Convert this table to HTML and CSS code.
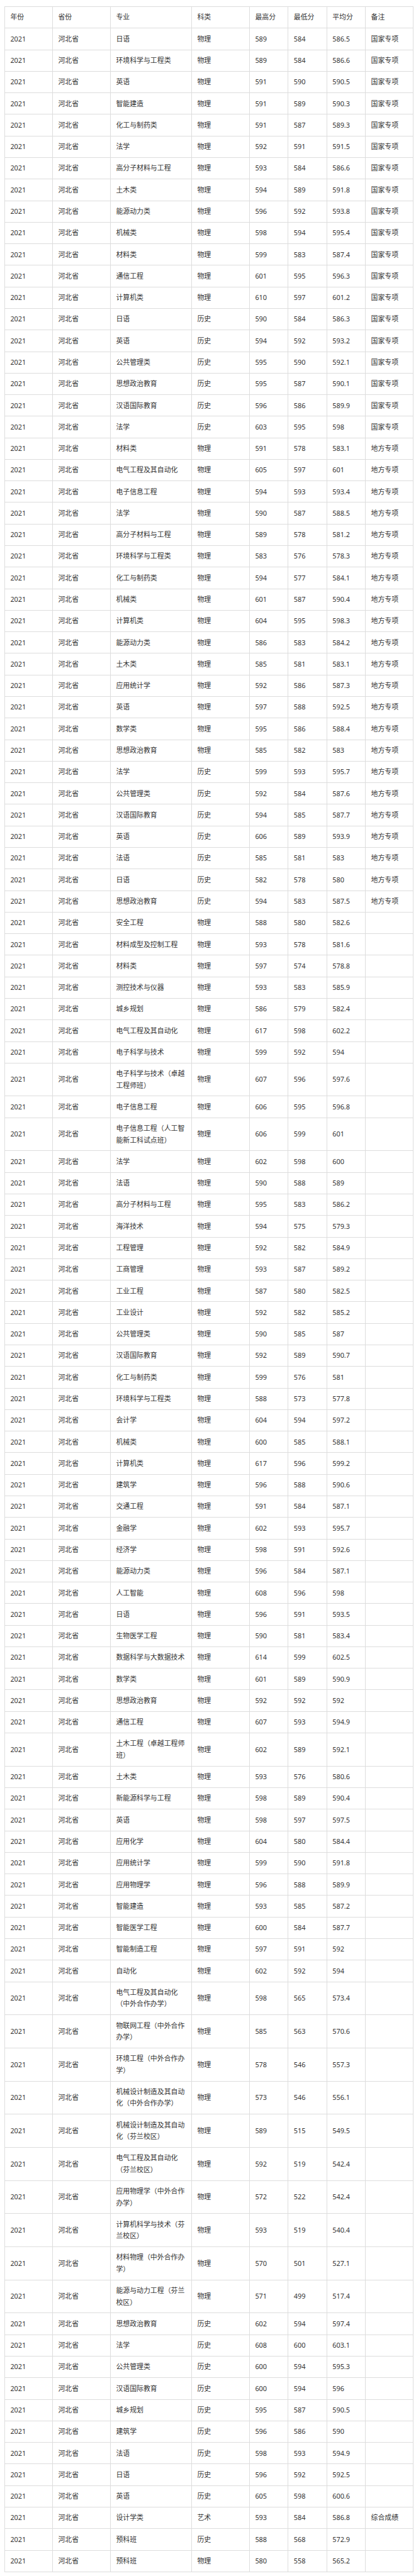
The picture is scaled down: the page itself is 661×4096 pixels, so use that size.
FILE: index.html
```html
<!DOCTYPE html>
<html lang="zh-CN">
<head>
<meta charset="utf-8">
<title>2021 河北省 录取分数</title>
<link rel="stylesheet" href="styles.css">
</head>
<body>
<table class="scores">
<colgroup>
<col class="c-year"><col class="c-prov"><col class="c-major"><col class="c-type"><col class="c-num"><col class="c-num"><col class="c-num"><col class="c-note">
</colgroup>
<tbody>
<tr><td>年份</td><td>省份</td><td>专业</td><td>科类</td><td>最高分</td><td>最低分</td><td>平均分</td><td>备注</td></tr>
<tr><td>2021</td><td>河北省</td><td>日语</td><td>物理</td><td>589</td><td>584</td><td>586.5</td><td>国家专项</td></tr>
<tr><td>2021</td><td>河北省</td><td>环境科学与工程类</td><td>物理</td><td>589</td><td>584</td><td>586.6</td><td>国家专项</td></tr>
<tr><td>2021</td><td>河北省</td><td>英语</td><td>物理</td><td>591</td><td>590</td><td>590.5</td><td>国家专项</td></tr>
<tr><td>2021</td><td>河北省</td><td>智能建造</td><td>物理</td><td>591</td><td>589</td><td>590.3</td><td>国家专项</td></tr>
<tr><td>2021</td><td>河北省</td><td>化工与制药类</td><td>物理</td><td>591</td><td>587</td><td>589.3</td><td>国家专项</td></tr>
<tr><td>2021</td><td>河北省</td><td>法学</td><td>物理</td><td>592</td><td>591</td><td>591.5</td><td>国家专项</td></tr>
<tr><td>2021</td><td>河北省</td><td>高分子材料与工程</td><td>物理</td><td>593</td><td>584</td><td>586.6</td><td>国家专项</td></tr>
<tr><td>2021</td><td>河北省</td><td>土木类</td><td>物理</td><td>594</td><td>589</td><td>591.8</td><td>国家专项</td></tr>
<tr><td>2021</td><td>河北省</td><td>能源动力类</td><td>物理</td><td>596</td><td>592</td><td>593.8</td><td>国家专项</td></tr>
<tr><td>2021</td><td>河北省</td><td>机械类</td><td>物理</td><td>598</td><td>594</td><td>595.4</td><td>国家专项</td></tr>
<tr><td>2021</td><td>河北省</td><td>材料类</td><td>物理</td><td>599</td><td>583</td><td>587.4</td><td>国家专项</td></tr>
<tr><td>2021</td><td>河北省</td><td>通信工程</td><td>物理</td><td>601</td><td>595</td><td>596.3</td><td>国家专项</td></tr>
<tr><td>2021</td><td>河北省</td><td>计算机类</td><td>物理</td><td>610</td><td>597</td><td>601.2</td><td>国家专项</td></tr>
<tr><td>2021</td><td>河北省</td><td>日语</td><td>历史</td><td>590</td><td>584</td><td>586.3</td><td>国家专项</td></tr>
<tr><td>2021</td><td>河北省</td><td>英语</td><td>历史</td><td>594</td><td>592</td><td>593.2</td><td>国家专项</td></tr>
<tr><td>2021</td><td>河北省</td><td>公共管理类</td><td>历史</td><td>595</td><td>590</td><td>592.1</td><td>国家专项</td></tr>
<tr><td>2021</td><td>河北省</td><td>思想政治教育</td><td>历史</td><td>595</td><td>587</td><td>590.1</td><td>国家专项</td></tr>
<tr><td>2021</td><td>河北省</td><td>汉语国际教育</td><td>历史</td><td>596</td><td>586</td><td>589.9</td><td>国家专项</td></tr>
<tr><td>2021</td><td>河北省</td><td>法学</td><td>历史</td><td>603</td><td>595</td><td>598</td><td>国家专项</td></tr>
<tr><td>2021</td><td>河北省</td><td>材料类</td><td>物理</td><td>591</td><td>578</td><td>583.1</td><td>地方专项</td></tr>
<tr><td>2021</td><td>河北省</td><td>电气工程及其自动化</td><td>物理</td><td>605</td><td>597</td><td>601</td><td>地方专项</td></tr>
<tr><td>2021</td><td>河北省</td><td>电子信息工程</td><td>物理</td><td>594</td><td>593</td><td>593.4</td><td>地方专项</td></tr>
<tr><td>2021</td><td>河北省</td><td>法学</td><td>物理</td><td>590</td><td>587</td><td>588.5</td><td>地方专项</td></tr>
<tr><td>2021</td><td>河北省</td><td>高分子材料与工程</td><td>物理</td><td>589</td><td>578</td><td>581.2</td><td>地方专项</td></tr>
<tr><td>2021</td><td>河北省</td><td>环境科学与工程类</td><td>物理</td><td>583</td><td>576</td><td>578.3</td><td>地方专项</td></tr>
<tr><td>2021</td><td>河北省</td><td>化工与制药类</td><td>物理</td><td>594</td><td>577</td><td>584.1</td><td>地方专项</td></tr>
<tr><td>2021</td><td>河北省</td><td>机械类</td><td>物理</td><td>601</td><td>587</td><td>590.4</td><td>地方专项</td></tr>
<tr><td>2021</td><td>河北省</td><td>计算机类</td><td>物理</td><td>604</td><td>595</td><td>598.3</td><td>地方专项</td></tr>
<tr><td>2021</td><td>河北省</td><td>能源动力类</td><td>物理</td><td>586</td><td>583</td><td>584.2</td><td>地方专项</td></tr>
<tr><td>2021</td><td>河北省</td><td>土木类</td><td>物理</td><td>585</td><td>581</td><td>583.1</td><td>地方专项</td></tr>
<tr><td>2021</td><td>河北省</td><td>应用统计学</td><td>物理</td><td>592</td><td>586</td><td>587.3</td><td>地方专项</td></tr>
<tr><td>2021</td><td>河北省</td><td>英语</td><td>物理</td><td>597</td><td>588</td><td>592.5</td><td>地方专项</td></tr>
<tr><td>2021</td><td>河北省</td><td>数学类</td><td>物理</td><td>595</td><td>586</td><td>588.4</td><td>地方专项</td></tr>
<tr><td>2021</td><td>河北省</td><td>思想政治教育</td><td>物理</td><td>585</td><td>582</td><td>583</td><td>地方专项</td></tr>
<tr><td>2021</td><td>河北省</td><td>法学</td><td>历史</td><td>599</td><td>593</td><td>595.7</td><td>地方专项</td></tr>
<tr><td>2021</td><td>河北省</td><td>公共管理类</td><td>历史</td><td>592</td><td>584</td><td>587.6</td><td>地方专项</td></tr>
<tr><td>2021</td><td>河北省</td><td>汉语国际教育</td><td>历史</td><td>594</td><td>585</td><td>587.7</td><td>地方专项</td></tr>
<tr><td>2021</td><td>河北省</td><td>英语</td><td>历史</td><td>606</td><td>589</td><td>593.9</td><td>地方专项</td></tr>
<tr><td>2021</td><td>河北省</td><td>法语</td><td>历史</td><td>585</td><td>581</td><td>583</td><td>地方专项</td></tr>
<tr><td>2021</td><td>河北省</td><td>日语</td><td>历史</td><td>582</td><td>578</td><td>580</td><td>地方专项</td></tr>
<tr><td>2021</td><td>河北省</td><td>思想政治教育</td><td>历史</td><td>594</td><td>583</td><td>587.5</td><td>地方专项</td></tr>
<tr><td>2021</td><td>河北省</td><td>安全工程</td><td>物理</td><td>588</td><td>580</td><td>582.6</td><td></td></tr>
<tr><td>2021</td><td>河北省</td><td>材料成型及控制工程</td><td>物理</td><td>593</td><td>578</td><td>581.6</td><td></td></tr>
<tr><td>2021</td><td>河北省</td><td>材料类</td><td>物理</td><td>597</td><td>574</td><td>578.8</td><td></td></tr>
<tr><td>2021</td><td>河北省</td><td>测控技术与仪器</td><td>物理</td><td>593</td><td>583</td><td>585.9</td><td></td></tr>
<tr><td>2021</td><td>河北省</td><td>城乡规划</td><td>物理</td><td>586</td><td>579</td><td>582.4</td><td></td></tr>
<tr><td>2021</td><td>河北省</td><td>电气工程及其自动化</td><td>物理</td><td>617</td><td>598</td><td>602.2</td><td></td></tr>
<tr><td>2021</td><td>河北省</td><td>电子科学与技术</td><td>物理</td><td>599</td><td>592</td><td>594</td><td></td></tr>
<tr><td>2021</td><td>河北省</td><td>电子科学与技术（卓越工程师班）</td><td>物理</td><td>607</td><td>596</td><td>597.6</td><td></td></tr>
<tr><td>2021</td><td>河北省</td><td>电子信息工程</td><td>物理</td><td>606</td><td>595</td><td>596.8</td><td></td></tr>
<tr><td>2021</td><td>河北省</td><td>电子信息工程（人工智能新工科试点班）</td><td>物理</td><td>606</td><td>599</td><td>601</td><td></td></tr>
<tr><td>2021</td><td>河北省</td><td>法学</td><td>物理</td><td>602</td><td>598</td><td>600</td><td></td></tr>
<tr><td>2021</td><td>河北省</td><td>法语</td><td>物理</td><td>590</td><td>588</td><td>589</td><td></td></tr>
<tr><td>2021</td><td>河北省</td><td>高分子材料与工程</td><td>物理</td><td>595</td><td>583</td><td>586.2</td><td></td></tr>
<tr><td>2021</td><td>河北省</td><td>海洋技术</td><td>物理</td><td>594</td><td>575</td><td>579.3</td><td></td></tr>
<tr><td>2021</td><td>河北省</td><td>工程管理</td><td>物理</td><td>592</td><td>582</td><td>584.9</td><td></td></tr>
<tr><td>2021</td><td>河北省</td><td>工商管理</td><td>物理</td><td>593</td><td>587</td><td>589.2</td><td></td></tr>
<tr><td>2021</td><td>河北省</td><td>工业工程</td><td>物理</td><td>587</td><td>580</td><td>582.5</td><td></td></tr>
<tr><td>2021</td><td>河北省</td><td>工业设计</td><td>物理</td><td>592</td><td>582</td><td>585.2</td><td></td></tr>
<tr><td>2021</td><td>河北省</td><td>公共管理类</td><td>物理</td><td>590</td><td>585</td><td>587</td><td></td></tr>
<tr><td>2021</td><td>河北省</td><td>汉语国际教育</td><td>物理</td><td>592</td><td>589</td><td>590.7</td><td></td></tr>
<tr><td>2021</td><td>河北省</td><td>化工与制药类</td><td>物理</td><td>599</td><td>576</td><td>581</td><td></td></tr>
<tr><td>2021</td><td>河北省</td><td>环境科学与工程类</td><td>物理</td><td>588</td><td>573</td><td>577.8</td><td></td></tr>
<tr><td>2021</td><td>河北省</td><td>会计学</td><td>物理</td><td>604</td><td>594</td><td>597.2</td><td></td></tr>
<tr><td>2021</td><td>河北省</td><td>机械类</td><td>物理</td><td>600</td><td>585</td><td>588.1</td><td></td></tr>
<tr><td>2021</td><td>河北省</td><td>计算机类</td><td>物理</td><td>617</td><td>596</td><td>599.2</td><td></td></tr>
<tr><td>2021</td><td>河北省</td><td>建筑学</td><td>物理</td><td>596</td><td>588</td><td>590.6</td><td></td></tr>
<tr><td>2021</td><td>河北省</td><td>交通工程</td><td>物理</td><td>591</td><td>584</td><td>587.1</td><td></td></tr>
<tr><td>2021</td><td>河北省</td><td>金融学</td><td>物理</td><td>602</td><td>593</td><td>595.7</td><td></td></tr>
<tr><td>2021</td><td>河北省</td><td>经济学</td><td>物理</td><td>598</td><td>591</td><td>592.6</td><td></td></tr>
<tr><td>2021</td><td>河北省</td><td>能源动力类</td><td>物理</td><td>596</td><td>584</td><td>587.1</td><td></td></tr>
<tr><td>2021</td><td>河北省</td><td>人工智能</td><td>物理</td><td>608</td><td>596</td><td>598</td><td></td></tr>
<tr><td>2021</td><td>河北省</td><td>日语</td><td>物理</td><td>596</td><td>591</td><td>593.5</td><td></td></tr>
<tr><td>2021</td><td>河北省</td><td>生物医学工程</td><td>物理</td><td>590</td><td>581</td><td>583.4</td><td></td></tr>
<tr><td>2021</td><td>河北省</td><td>数据科学与大数据技术</td><td>物理</td><td>614</td><td>599</td><td>602.5</td><td></td></tr>
<tr><td>2021</td><td>河北省</td><td>数学类</td><td>物理</td><td>601</td><td>589</td><td>590.9</td><td></td></tr>
<tr><td>2021</td><td>河北省</td><td>思想政治教育</td><td>物理</td><td>592</td><td>592</td><td>592</td><td></td></tr>
<tr><td>2021</td><td>河北省</td><td>通信工程</td><td>物理</td><td>607</td><td>593</td><td>594.9</td><td></td></tr>
<tr><td>2021</td><td>河北省</td><td>土木工程（卓越工程师班）</td><td>物理</td><td>602</td><td>589</td><td>592.1</td><td></td></tr>
<tr><td>2021</td><td>河北省</td><td>土木类</td><td>物理</td><td>593</td><td>576</td><td>580.6</td><td></td></tr>
<tr><td>2021</td><td>河北省</td><td>新能源科学与工程</td><td>物理</td><td>598</td><td>589</td><td>590.4</td><td></td></tr>
<tr><td>2021</td><td>河北省</td><td>英语</td><td>物理</td><td>598</td><td>597</td><td>597.5</td><td></td></tr>
<tr><td>2021</td><td>河北省</td><td>应用化学</td><td>物理</td><td>604</td><td>580</td><td>584.4</td><td></td></tr>
<tr><td>2021</td><td>河北省</td><td>应用统计学</td><td>物理</td><td>599</td><td>590</td><td>591.8</td><td></td></tr>
<tr><td>2021</td><td>河北省</td><td>应用物理学</td><td>物理</td><td>596</td><td>588</td><td>589.9</td><td></td></tr>
<tr><td>2021</td><td>河北省</td><td>智能建造</td><td>物理</td><td>593</td><td>585</td><td>587.2</td><td></td></tr>
<tr><td>2021</td><td>河北省</td><td>智能医学工程</td><td>物理</td><td>600</td><td>584</td><td>587.7</td><td></td></tr>
<tr><td>2021</td><td>河北省</td><td>智能制造工程</td><td>物理</td><td>597</td><td>591</td><td>592</td><td></td></tr>
<tr><td>2021</td><td>河北省</td><td>自动化</td><td>物理</td><td>602</td><td>592</td><td>594</td><td></td></tr>
<tr><td>2021</td><td>河北省</td><td>电气工程及其自动化（中外合作办学）</td><td>物理</td><td>598</td><td>565</td><td>573.4</td><td></td></tr>
<tr><td>2021</td><td>河北省</td><td>物联网工程（中外合作办学）</td><td>物理</td><td>585</td><td>563</td><td>570.6</td><td></td></tr>
<tr><td>2021</td><td>河北省</td><td>环境工程（中外合作办学）</td><td>物理</td><td>578</td><td>546</td><td>557.3</td><td></td></tr>
<tr><td>2021</td><td>河北省</td><td>机械设计制造及其自动化（中外合作办学）</td><td>物理</td><td>573</td><td>546</td><td>556.1</td><td></td></tr>
<tr><td>2021</td><td>河北省</td><td>机械设计制造及其自动化（芬兰校区）</td><td>物理</td><td>589</td><td>515</td><td>549.5</td><td></td></tr>
<tr><td>2021</td><td>河北省</td><td>电气工程及其自动化（芬兰校区）</td><td>物理</td><td>592</td><td>519</td><td>542.4</td><td></td></tr>
<tr><td>2021</td><td>河北省</td><td>应用物理学（中外合作办学）</td><td>物理</td><td>572</td><td>522</td><td>542.4</td><td></td></tr>
<tr><td>2021</td><td>河北省</td><td>计算机科学与技术（芬兰校区）</td><td>物理</td><td>593</td><td>519</td><td>540.4</td><td></td></tr>
<tr><td>2021</td><td>河北省</td><td>材料物理（中外合作办学）</td><td>物理</td><td>570</td><td>501</td><td>527.1</td><td></td></tr>
<tr><td>2021</td><td>河北省</td><td>能源与动力工程（芬兰校区）</td><td>物理</td><td>571</td><td>499</td><td>517.4</td><td></td></tr>
<tr><td>2021</td><td>河北省</td><td>思想政治教育</td><td>历史</td><td>602</td><td>594</td><td>597.4</td><td></td></tr>
<tr><td>2021</td><td>河北省</td><td>法学</td><td>历史</td><td>608</td><td>600</td><td>603.1</td><td></td></tr>
<tr><td>2021</td><td>河北省</td><td>公共管理类</td><td>历史</td><td>600</td><td>594</td><td>595.3</td><td></td></tr>
<tr><td>2021</td><td>河北省</td><td>汉语国际教育</td><td>历史</td><td>600</td><td>594</td><td>596</td><td></td></tr>
<tr><td>2021</td><td>河北省</td><td>城乡规划</td><td>历史</td><td>595</td><td>587</td><td>590.5</td><td></td></tr>
<tr><td>2021</td><td>河北省</td><td>建筑学</td><td>历史</td><td>596</td><td>586</td><td>590</td><td></td></tr>
<tr><td>2021</td><td>河北省</td><td>法语</td><td>历史</td><td>598</td><td>593</td><td>594.9</td><td></td></tr>
<tr><td>2021</td><td>河北省</td><td>日语</td><td>历史</td><td>596</td><td>592</td><td>592.5</td><td></td></tr>
<tr><td>2021</td><td>河北省</td><td>英语</td><td>历史</td><td>605</td><td>598</td><td>600.6</td><td></td></tr>
<tr><td>2021</td><td>河北省</td><td>设计学类</td><td>艺术</td><td>593</td><td>584</td><td>586.8</td><td>综合成绩</td></tr>
<tr><td>2021</td><td>河北省</td><td>预科班</td><td>历史</td><td>588</td><td>568</td><td>572.9</td><td></td></tr>
<tr><td>2021</td><td>河北省</td><td>预科班</td><td>物理</td><td>580</td><td>558</td><td>565.2</td><td></td></tr>
</tbody>
</table>
</body>
</html>
```

FILE: styles.css
```css
html, body {
  margin: 0;
  padding: 0;
  background: #ffffff;
}

body {
  font-family: "Noto Sans", "Noto Sans CJK SC", sans-serif;
  color: #333333;
}

.scores {
  margin: 10px 0 0 7px;
  width: 649px;
  border-collapse: collapse;
  table-layout: fixed;
  font-size: 10.9px;
  line-height: 18.4px;
}

.scores td {
  border: 1px solid #dddddd;
  padding: 7.45px 8.4px;
  vertical-align: middle;
  text-align: left;
}

.c-year { width: 76px; }
.c-prov { width: 92px; }
.c-major { width: 129px; }
.c-type { width: 92px; }
.c-num { width: 61.4px; }
.c-note { width: 75.8px; }
```
